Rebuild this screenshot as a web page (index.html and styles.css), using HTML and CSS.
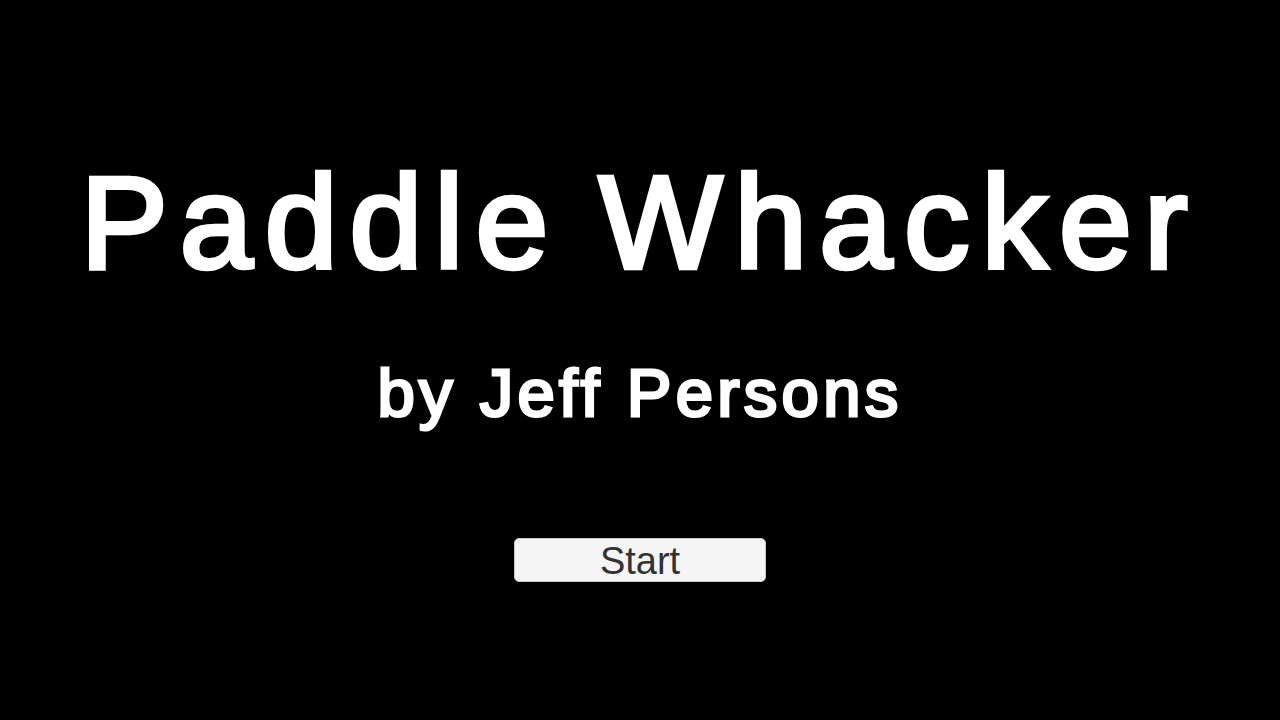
FILE: index.html
```html
<!DOCTYPE html>
<html lang="en">
<head>
    <meta charset="UTF-8">
    <meta name="viewport" content="width=device-width, initial-scale=1.0">
    <title>Paddle Whacker</title>
    <link rel="stylesheet" href="styles.css">
</head>
<body>
    <div class="menu">
        <h1 class="title">Paddle Whacker</h1>
        <div class="credit">by Jeff Persons</div>
        <button class="start-btn">Start</button>
    </div>
</body>
</html>
```

FILE: styles.css
```css
html, body {
    margin: 0;
    padding: 0;
    height: 100%;
}
body {
    background-color: #000;
    font-family: "Liberation Sans", Arial, sans-serif;
    color: #fff;
}
.menu {
    display: flex;
    flex-direction: column;
    align-items: center;
    padding-top: 153px;
}
/* regular weight, thickened with a stroke */
.title {
    margin: 0;
    font-size: 131px;
    font-weight: normal;
    letter-spacing: 12px;
    word-spacing: -10px;
    line-height: 140px;
    -webkit-text-stroke: 4.5px #fff;
}
.credit {
    margin-top: 60px;
    font-size: 67px;
    letter-spacing: 4.3px;
    line-height: 80px;
    -webkit-text-stroke: 3px #fff;
}
.start-btn {
    margin-top: 105px;
    width: 252px;
    height: 44px;
    background-color: #f5f5f5;
    border: 1px solid #c8c8c8;
    border-radius: 5px;
    color: #323232;
    font-family: "Liberation Sans", Arial, sans-serif;
    font-size: 38px;
    line-height: 44px;
    padding: 0;
}
```
